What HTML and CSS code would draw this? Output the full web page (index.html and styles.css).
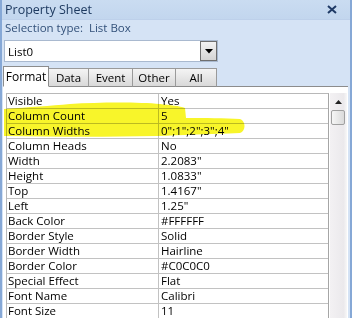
FILE: index.html
```html
<!DOCTYPE html>
<html>
<head>
  <meta name="viewport" content="width=device-width, initial-scale=1">
  <link rel="stylesheet" href="styles.css">
</head>
<body>
  <div class="pane">
    <div class="titlebar">
      <span class="title">Property Sheet</span>
      <svg class="close" width="10" height="9" viewBox="0 0 10 9">
        <path d="M1 1 L9 8 M9 1 L1 8" stroke="#1f3a66" stroke-width="2"/>
      </svg>
    </div>
    <div class="seltype">Selection type:&nbsp; List Box</div>

    <div class="combo-row">
      <div class="combo">
        <span class="combo-text">List0</span>
        <span class="combo-btn">
          <svg width="8" height="5" viewBox="0 0 8 5"><path d="M0 0 H8 L4 4.5 Z" fill="#000"/></svg>
        </span>
      </div>
    </div>

    <div class="tabs">
      <div class="tab active">Format</div>
      <div class="tab">Data</div>
      <div class="tab">Event</div>
      <div class="tab">Other</div>
      <div class="tab">All</div>
      <div class="tab-rest"></div>
    </div>

    <div class="page">
      <div class="grid">
        <div class="row"><div class="name">Visible</div><div class="value">Yes</div></div>
        <div class="row"><div class="name">Column Count</div><div class="value">5</div></div>
        <div class="row"><div class="name">Column Widths</div><div class="value">0";1";2";3";4"</div></div>
        <div class="row"><div class="name">Column Heads</div><div class="value">No</div></div>
        <div class="row"><div class="name">Width</div><div class="value">2.2083"</div></div>
        <div class="row"><div class="name">Height</div><div class="value">1.0833"</div></div>
        <div class="row"><div class="name">Top</div><div class="value">1.4167"</div></div>
        <div class="row"><div class="name">Left</div><div class="value">1.25"</div></div>
        <div class="row"><div class="name">Back Color</div><div class="value">#FFFFFF</div></div>
        <div class="row"><div class="name">Border Style</div><div class="value">Solid</div></div>
        <div class="row"><div class="name">Border Width</div><div class="value">Hairline</div></div>
        <div class="row"><div class="name">Border Color</div><div class="value">#C0C0C0</div></div>
        <div class="row"><div class="name">Special Effect</div><div class="value">Flat</div></div>
        <div class="row"><div class="name">Font Name</div><div class="value">Calibri</div></div>
        <div class="row"><div class="name">Font Size</div><div class="value">11</div></div>
      </div>
      <div class="scrollbar">
        <div class="scroll-up">
          <svg width="7" height="4" viewBox="0 0 7 4"><path d="M0 4 H7 L3.5 0 Z" fill="#222"/></svg>
        </div>
        <div class="thumb"></div>
      </div>
    </div>

    <svg class="marker" width="352" height="318" viewBox="0 0 352 318">
      <path d="M4 109 C30 107 50 106 70 104 C100 102 140 102 160 104 C170 105 180 106 185 108
               L186 118 C205 118 225 118 240 119 C246 121 246 131 240 133
               C210 134 180 135 157 136 C110 137 60 137 4 136 Z"
            fill="#f8f52a"/>
    </svg>
  </div>
</body>
</html>
```

FILE: styles.css
```css
body {
  margin: 0;
  width: 352px;
  height: 318px;
  overflow: hidden;
  background-color: #d5e3f5;
}
.pane {
  position: relative;
  height: 318px;
  border-left: 2px solid #86a8d6;
  border-right: 2px solid #86a8d6;
  background-color: #d5e3f5;
  font-family: "Open Sans", "Liberation Sans", sans-serif;
}
.titlebar {
  display: flex;
  align-items: center;
  justify-content: space-between;
  height: 20px;
  padding: 0 13px 0 3px;
  background: linear-gradient(#cadcf1, #c2d6ee);
  border-bottom: 1px solid #bdd0ea;
  box-sizing: border-box;
}
.title {
  font-size: 12.5px;
  color: #1e3a60;
}
.seltype {
  height: 16px;
  line-height: 15px;
  padding-left: 3px;
  font-size: 11.5px;
  color: #33517a;
}
.combo-row {
  height: 30px;
  padding: 4px 0 0 2px;
  box-sizing: border-box;
}
.combo {
  display: flex;
  align-items: center;
  justify-content: space-between;
  width: 214px;
  height: 22px;
  background-color: #fff;
  border: 1px solid #a9b9cf;
  box-sizing: border-box;
}
.combo-text {
  font-size: 11.5px;
  padding-left: 3px;
  color: #000;
}
.combo-btn {
  display: flex;
  align-items: center;
  justify-content: center;
  width: 17px;
  height: 20px;
  background: linear-gradient(#f2f2f2, #d4d4d4);
  border: 1px solid #6f6f6f;
  box-sizing: border-box;
}
.tabs {
  display: flex;
  align-items: flex-end;
  height: 21px;
  padding-left: 1px;
}
.tab {
  height: 19px;
  line-height: 18px;
  font-size: 11.5px;
  color: #000;
  background: linear-gradient(#f4f4f4, #d9d9d9);
  border: 1px solid #9a9a9a;
  border-left: none;
  border-bottom: 1px solid #8c8c8c;
  box-sizing: border-box;
  text-align: center;
}
.tab:nth-child(2) { width: 40px; }
.tab:nth-child(3) { width: 44px; }
.tab:nth-child(4) { width: 43px; }
.tab:nth-child(5) { width: 41px; }
.tab.active {
  width: 46px;
  height: 21px;
  line-height: 19px;
  background: #fff;
  border-left: 1px solid #8c8c8c;
  border-color: #8c8c8c;
  border-bottom-color: #fff;
  font-size: 12px;
}
.tab-rest {
  flex: 1;
  border-bottom: 1px solid #8c8c8c;
  margin-right: 2px;
}
.page {
  display: flex;
  align-items: flex-start;
  height: 231px;
  margin: 0 2px 0 1px;
  padding: 6px 0 0 3px;
  background-color: #fff;
}
.grid {
  width: 323px;
  border: 1px solid #b8b8b8;
  border-right-color: #a6a6a6;
  box-sizing: border-box;
  font-size: 11.5px;
  color: #000;
}
.row {
  display: flex;
  height: 15px;
  border-bottom: 1px solid #c2c2c2;
  box-sizing: border-box;
}
.name {
  width: 150px;
  padding-left: 1px;
  line-height: 14px;
  border-right: 1px solid #c2c2c2;
  white-space: nowrap;
}
.value {
  padding-left: 2px;
  line-height: 14px;
  white-space: nowrap;
}
.scrollbar {
  width: 17px;
  height: 231px;
  margin-left: 1px;
  background: linear-gradient(90deg, #f3f1f3, #ebe9ec 80%, #f8f8f8);
}
.scroll-up {
  display: flex;
  justify-content: center;
  align-items: center;
  height: 17px;
}
.thumb {
  width: 14px;
  height: 15px;
  margin-left: 1px;
  border: 1px solid #a0a0a0;
  border-radius: 2px;
  background: linear-gradient(90deg, #f6f6f6, #dadada);
  box-sizing: border-box;
}
.marker {
  position: absolute;
  left: -2px;
  top: 0;
  pointer-events: none;
  mix-blend-mode: multiply;
}
```
